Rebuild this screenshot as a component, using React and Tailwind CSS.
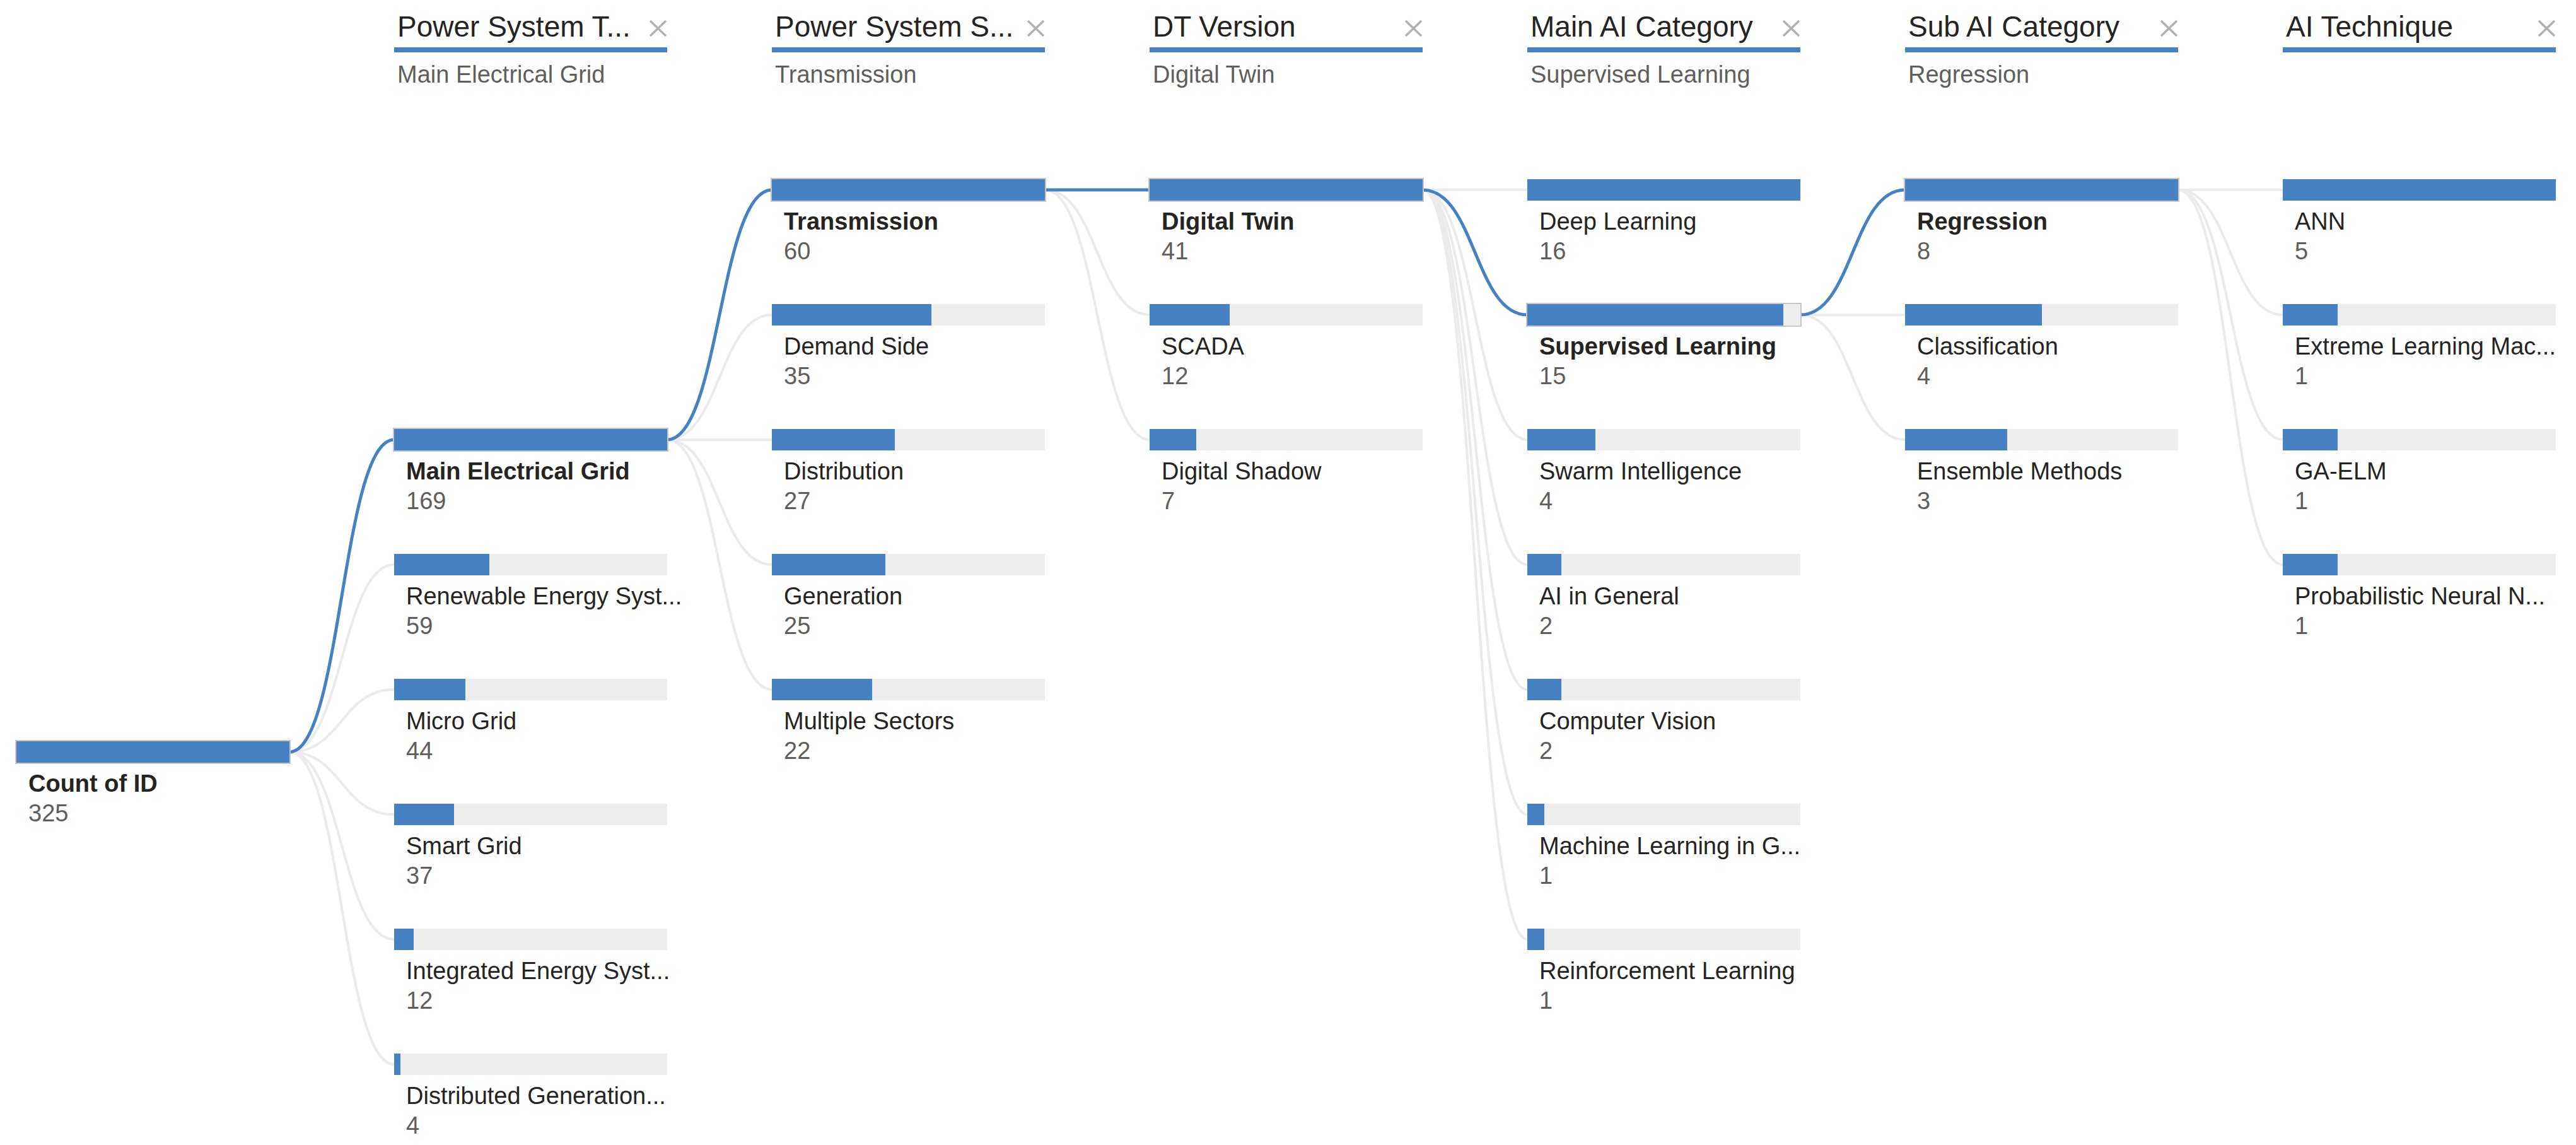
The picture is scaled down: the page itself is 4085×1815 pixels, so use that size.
import React from "react";

// decomposition tree: root measure on the left, one level per column
const columns = [
  {
    title: null,
    offset: "mt-[891px]",
    row: 4.5,
    nodes: [{ label: "Count of ID", value: 325, selected: true }],
  },
  {
    title: "Power System T...",
    sub: "Main Electrical Grid",
    offset: "mt-[396px]",
    row: 2,
    nodes: [
      { label: "Main Electrical Grid", value: 169, selected: true },
      { label: "Renewable Energy Syst...", value: 59 },
      { label: "Micro Grid", value: 44 },
      { label: "Smart Grid", value: 37 },
      { label: "Integrated Energy Syst...", value: 12 },
      { label: "Distributed Generation...", value: 4 },
    ],
  },
  {
    title: "Power System S...",
    sub: "Transmission",
    offset: "mt-0",
    row: 0,
    nodes: [
      { label: "Transmission", value: 60, selected: true },
      { label: "Demand Side", value: 35 },
      { label: "Distribution", value: 27 },
      { label: "Generation", value: 25 },
      { label: "Multiple Sectors", value: 22 },
    ],
  },
  {
    title: "DT Version",
    sub: "Digital Twin",
    offset: "mt-0",
    row: 0,
    nodes: [
      { label: "Digital Twin", value: 41, selected: true },
      { label: "SCADA", value: 12 },
      { label: "Digital Shadow", value: 7 },
    ],
  },
  {
    title: "Main AI Category",
    sub: "Supervised Learning",
    offset: "mt-0",
    row: 0,
    nodes: [
      { label: "Deep Learning", value: 16 },
      { label: "Supervised Learning", value: 15, selected: true },
      { label: "Swarm Intelligence", value: 4 },
      { label: "AI in General", value: 2 },
      { label: "Computer Vision", value: 2 },
      { label: "Machine Learning in G...", value: 1 },
      { label: "Reinforcement Learning", value: 1 },
    ],
  },
  {
    title: "Sub AI Category",
    sub: "Regression",
    offset: "mt-0",
    row: 0,
    nodes: [
      { label: "Regression", value: 8, selected: true },
      { label: "Classification", value: 4 },
      { label: "Ensemble Methods", value: 3 },
    ],
  },
  {
    title: "AI Technique",
    sub: "",
    offset: "mt-0",
    row: 0,
    nodes: [
      { label: "ANN", value: 5 },
      { label: "Extreme Learning Mac...", value: 1 },
      { label: "GA-ELM", value: 1 },
      { label: "Probabilistic Neural N...", value: 1 },
    ],
  },
];

const COL_X = 26;
const PITCH = 599;
const BAR_W = 433;
const TOP = 284;
const ROW_H = 198;

const barCenter = (row) => TOP + ROW_H * row + 17;

function buildLinks() {
  const gray = [];
  const blue = [];
  for (let k = 1; k < columns.length; k++) {
    const parent = columns[k - 1];
    const pIdx = parent.nodes.findIndex((n) => n.selected);
    const x1 = COL_X + PITCH * (k - 1) + BAR_W;
    const y1 = barCenter(parent.row + pIdx);
    const x2 = COL_X + PITCH * k;
    const d = (x2 - x1) / 2;
    columns[k].nodes.forEach((n, i) => {
      const y2 = barCenter(columns[k].row + i);
      const path = `M${x1} ${y1} C${x1 + d} ${y1} ${x2 - d} ${y2} ${x2} ${y2}`;
      (n.selected ? blue : gray).push(path);
    });
  }
  return { gray, blue };
}

function CloseIcon() {
  return (
    <svg width="29" height="26" viewBox="0 0 29 26" className="mt-[4px] shrink-0">
      <path d="M2 1 L27 25 M27 1 L2 25" stroke="#b3b0ad" strokeWidth="3.5" fill="none" />
    </svg>
  );
}

function Node({ node, max }) {
  return (
    <div className="h-[198px]">
      <div
        className={
          "h-[34px] bg-[#ededed] " +
          (node.selected ? "outline-2 outline-[#c8c6c4]" : "")
        }
      >
        <div className="h-full bg-[#4682c3]" style={{ width: `${(node.value / max) * 100}%` }} />
      </div>
      <div className="mt-[10px] pl-[19px] whitespace-nowrap text-[38px] leading-[47px]">
        <div className={node.selected ? "font-bold text-[#252423]" : "text-[#252423]"}>
          {node.label}
        </div>
        <div className="text-[#605e5c]">{node.value}</div>
      </div>
    </div>
  );
}

function Column({ col }) {
  const max = Math.max(...col.nodes.map((n) => n.value));
  return (
    <div className="flex w-[433px] shrink-0 flex-col">
      <div className="h-[284px] pt-[16px] pl-[5px]">
        {col.title && (
          <>
            <div className="flex h-[53px] items-center justify-between">
              <span className="whitespace-nowrap text-[46px] leading-[53px] text-[#252423]">
                {col.title}
              </span>
              <CloseIcon />
            </div>
            <div className="-ml-[5px] mt-[6px] h-[8px] bg-[#4682c3]" />
            <div className="mt-[12px] whitespace-nowrap text-[38px] leading-[47px] text-[#605e5c]">
              {col.sub}
            </div>
          </>
        )}
      </div>
      <div className={col.offset}>
        {col.nodes.map((n) => (
          <Node key={n.label} node={n} max={max} />
        ))}
      </div>
    </div>
  );
}

export default function App() {
  const links = buildLinks();
  return (
    <div className="relative h-[1815px] w-[4085px] overflow-hidden bg-white font-['Liberation_Sans',Arial,sans-serif]">
      <svg className="pointer-events-none absolute inset-0" width="4085" height="1815">
        {links.gray.map((d, i) => (
          <path key={"g" + i} d={d} stroke="#ebebeb" strokeWidth="4" fill="none" />
        ))}
        {links.blue.map((d, i) => (
          <path key={"b" + i} d={d} stroke="#4682c3" strokeWidth="5" fill="none" />
        ))}
      </svg>
      <div className="relative flex gap-[166px] pl-[26px]">
        {columns.map((c, i) => (
          <Column key={i} col={c} />
        ))}
      </div>
    </div>
  );
}
